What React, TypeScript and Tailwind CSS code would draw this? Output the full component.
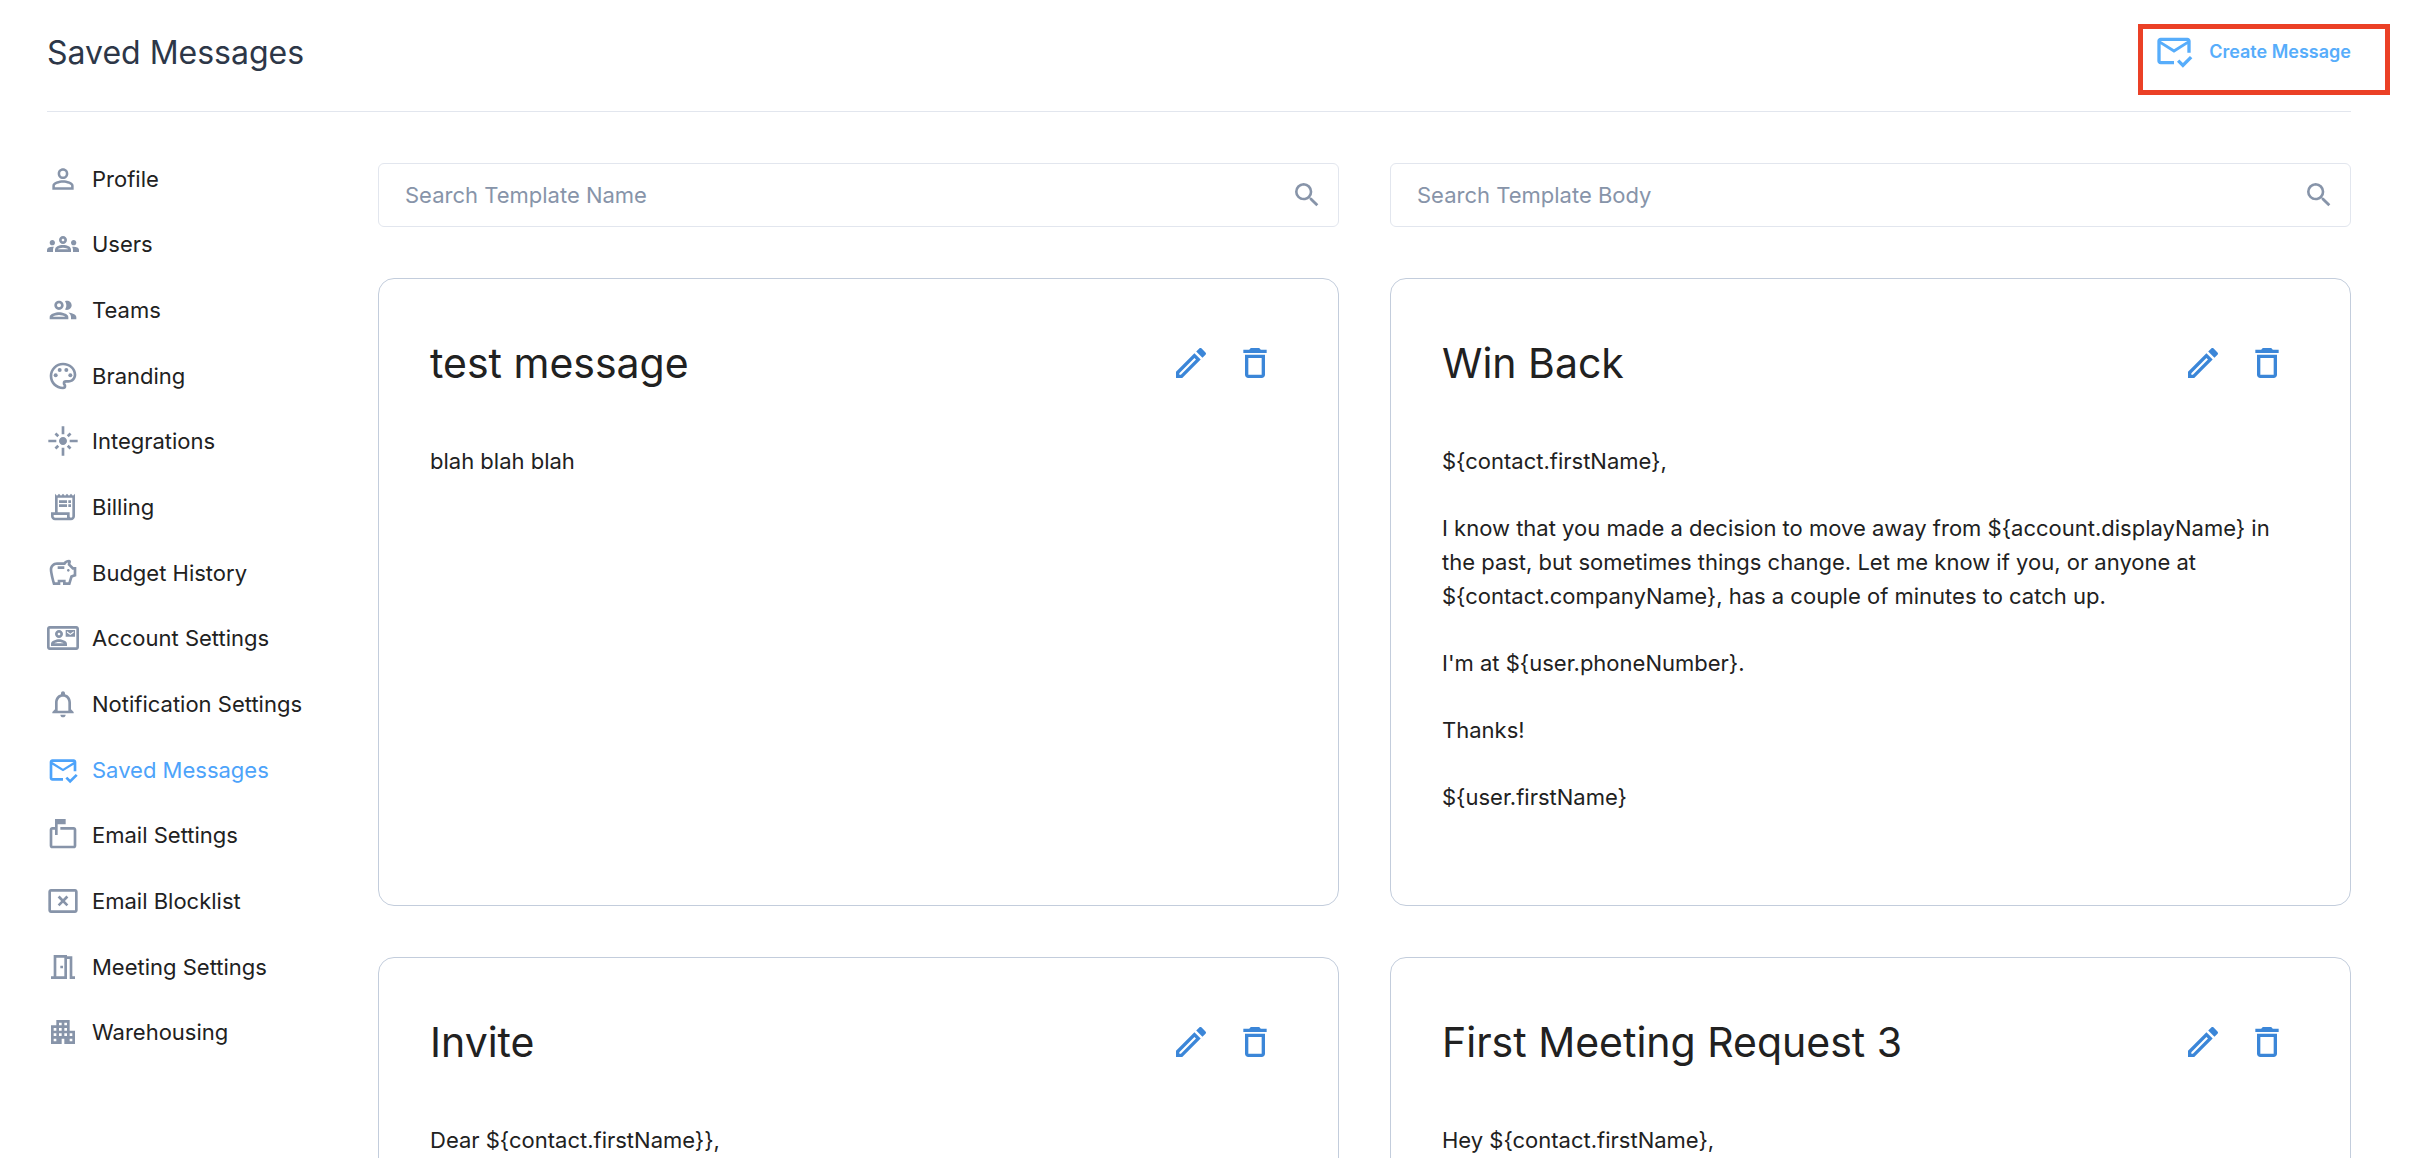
import { useState } from 'react';
import type { IconType } from 'react-icons';
import {
  MdDeleteOutline,
  MdFlare,
  MdNotificationsNone,
  MdOutlineApartment,
  MdOutlineCancelPresentation,
  MdOutlineContactMail,
  MdOutlineEdit,
  MdOutlineGroup,
  MdOutlineGroups,
  MdOutlineMarkEmailRead,
  MdOutlineMarkunreadMailbox,
  MdOutlineMeetingRoom,
  MdOutlinePalette,
  MdOutlineReceiptLong,
  MdOutlineSavings,
  MdPersonOutline,
  MdSearch,
} from 'react-icons/md';

interface NavItem {
  label: string;
  icon: IconType;
}

interface Template {
  name: string;
  body: string[];
}

const NAV: NavItem[] = [
  { label: 'Profile', icon: MdPersonOutline },
  { label: 'Users', icon: MdOutlineGroups },
  { label: 'Teams', icon: MdOutlineGroup },
  { label: 'Branding', icon: MdOutlinePalette },
  { label: 'Integrations', icon: MdFlare },
  { label: 'Billing', icon: MdOutlineReceiptLong },
  { label: 'Budget History', icon: MdOutlineSavings },
  { label: 'Account Settings', icon: MdOutlineContactMail },
  { label: 'Notification Settings', icon: MdNotificationsNone },
  { label: 'Saved Messages', icon: MdOutlineMarkEmailRead },
  { label: 'Email Settings', icon: MdOutlineMarkunreadMailbox },
  { label: 'Email Blocklist', icon: MdOutlineCancelPresentation },
  { label: 'Meeting Settings', icon: MdOutlineMeetingRoom },
  { label: 'Warehousing', icon: MdOutlineApartment },
];

const TEMPLATES: Template[] = [
  { name: 'test message', body: ['blah blah blah'] },
  {
    name: 'Win Back',
    body: [
      '${contact.firstName},',
      'I know that you made a decision to move away from ${account.displayName} in the past, but sometimes things change. Let me know if you, or anyone at ${contact.companyName}, has a couple of minutes to catch up.',
      "I'm at ${user.phoneNumber}.",
      'Thanks!',
      '${user.firstName}',
    ],
  },
  { name: 'Invite', body: ['Dear ${contact.firstName}},'] },
  { name: 'First Meeting Request 3', body: ['Hey ${contact.firstName},'] },
];

function SearchField({
  label,
  value,
  onChange,
}: {
  label: string;
  value: string;
  onChange: (value: string) => void;
}) {
  return (
    <label className="flex h-16 items-center rounded-md border border-[#e2e6ee] pr-[15px] pl-[26px]">
      <input
        type="text"
        aria-label={label}
        placeholder={label}
        value={value}
        onChange={(e) => onChange(e.target.value)}
        className="min-w-0 flex-1 bg-transparent text-[22px] leading-8 outline-none placeholder:text-[#8794a9]"
      />
      <MdSearch className="size-8 shrink-0 text-[#8794a9]" />
    </label>
  );
}

function TemplateCard({ template }: { template: Template }) {
  return (
    <article className="min-h-[628px] rounded-2xl border border-[#c3cddc] px-[51px] pt-14">
      <header className="flex items-center justify-between pr-3">
        <h2 className="text-[41px] leading-[56px]">{template.name}</h2>
        <div className="flex gap-6">
          <button type="button" aria-label={`Edit ${template.name}`}>
            <MdOutlineEdit className="size-10 text-[#3b86d8]" />
          </button>
          <button type="button" aria-label={`Delete ${template.name}`}>
            <MdDeleteOutline className="size-10 text-[#3b86d8]" />
          </button>
        </div>
      </header>
      <div className="mt-[53px] space-y-[33px] text-[22px] leading-[34px]">
        {template.body.map((p) => (
          <p key={p}>{p}</p>
        ))}
      </div>
    </article>
  );
}

export default function App() {
  const [active, setActive] = useState('Saved Messages');
  const [name, setName] = useState('');
  const [body, setBody] = useState('');

  const visible = TEMPLATES.filter(
    (t) =>
      t.name.toLowerCase().includes(name.toLowerCase()) &&
      t.body.join(' ').toLowerCase().includes(body.toLowerCase()),
  );

  return (
    <div className="h-screen overflow-y-auto bg-white pr-[81px] pl-[47px] font-['Inter','Liberation_Sans',sans-serif] text-[#212121] [scrollbar-width:none]">
      <header className="flex h-28 items-start justify-between border-b border-[#e2e6ee] pt-[31px]">
        <h1 className="text-[32px] leading-[44px] text-[#2d3748]">
          Saved Messages
        </h1>
        <button
          type="button"
          className="relative flex h-10 items-center gap-[15px] text-[18px] font-semibold text-[#57adfb]"
        >
          <MdOutlineMarkEmailRead className="size-10" />
          Create Message
          {/* highlight frame */}
          <span className="pointer-events-none absolute -top-[7px] -right-[39px] -bottom-6 -left-4 border-[5px] border-[#eb4026]" />
        </button>
      </header>

      <div className="flex pt-[51px]">
        <nav className="-mt-[17px] w-[331px] shrink-0">
          <ul className="grid min-h-[919px] auto-rows-fr">
            {NAV.map(({ label, icon: Icon }) => (
              <li key={label} className="flex items-center">
                <a
                  href="#"
                  onClick={() => setActive(label)}
                  className={
                    label === active
                      ? 'flex items-center gap-[13px] text-[22px] leading-8 text-[#4da3fa]'
                      : 'flex items-center gap-[13px] text-[22px] leading-8'
                  }
                >
                  <Icon
                    className={
                      label === active
                        ? 'size-8 text-[#4da3fa]'
                        : 'size-8 text-[#8794a9]'
                    }
                  />
                  {label}
                </a>
              </li>
            ))}
          </ul>
        </nav>

        <main className="grid flex-1 grid-cols-2 content-start gap-[51px]">
          <SearchField
            label="Search Template Name"
            value={name}
            onChange={setName}
          />
          <SearchField
            label="Search Template Body"
            value={body}
            onChange={setBody}
          />
          {visible.map((t) => (
            <TemplateCard key={t.name} template={t} />
          ))}
        </main>
      </div>
    </div>
  );
}
